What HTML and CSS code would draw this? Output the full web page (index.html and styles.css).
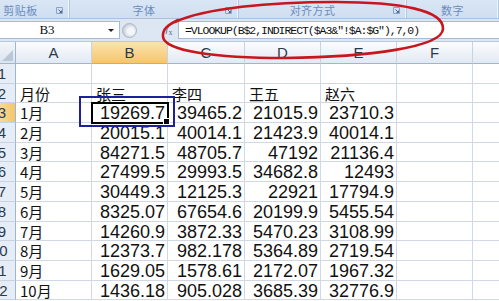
FILE: index.html
```html
<!DOCTYPE html>
<html lang="zh-CN">
<head>
  <meta charset="UTF-8" />
  <title>Excel - VLOOKUP</title>
  <link rel="stylesheet" href="styles.css">
</head>
<body>

  <!-- ribbon group labels -->
  <div class="ribbon">
    <div class="group g-clip"><span class="label">剪贴板</span><span class="launcher"><svg viewBox="0 0 9 9" width="9" height="9"><path d="M1.5 1.5h6v6h-6z" fill="none" stroke="#8aa4c8"/><path d="M3.5 3.5l3 3M6.5 4.5v2h-2" fill="none" stroke="#51698f"/></svg></span></div>
    <div class="group g-font"><span class="label">字体</span><span class="launcher"><svg viewBox="0 0 9 9" width="9" height="9"><path d="M1.5 1.5h6v6h-6z" fill="none" stroke="#8aa4c8"/><path d="M3.5 3.5l3 3M6.5 4.5v2h-2" fill="none" stroke="#51698f"/></svg></span></div>
    <div class="group g-align"><span class="label">对齐方式</span><span class="launcher"><svg viewBox="0 0 9 9" width="9" height="9"><path d="M1.5 1.5h6v6h-6z" fill="none" stroke="#8aa4c8"/><path d="M3.5 3.5l3 3M6.5 4.5v2h-2" fill="none" stroke="#51698f"/></svg></span></div>
    <div class="group g-num"><span class="label">数字</span></div>
  </div>

  <!-- formula bar -->
  <div class="fbar">
    <div class="namebox"><span class="ref">B3</span><span class="drop"></span></div>
    <div class="splitter"><span class="knob"></span></div>
    <div class="fx"><i>f</i><sub>x</sub></div>
    <div class="formula">=VLOOKUP(B$2,INDIRECT($A3&amp;"!$A:$G"),7,0)</div>
  </div>

  <!-- worksheet -->
  <div class="sheet">
    <div class="corner"></div>
    <div class="ch">A</div><div class="ch on">B</div><div class="ch">C</div><div class="ch">D</div><div class="ch">E</div><div class="ch">F</div><div class="ch"></div>

    <div class="rh">1</div>
    <div class="c"></div><div class="c"></div><div class="c"></div><div class="c"></div><div class="c"></div><div class="c"></div><div class="c"></div>

    <div class="rh">2</div>
    <div class="c t">月份</div><div class="c t">张三</div><div class="c t">李四</div><div class="c t">王五</div><div class="c t">赵六</div><div class="c"></div><div class="c"></div>

    <div class="rh on">3</div>
    <div class="c t">1月</div><div class="c n sel">19269.7</div><div class="c n">39465.2</div><div class="c n">21015.9</div><div class="c n">23710.3</div><div class="c"></div><div class="c"></div>

    <div class="rh">4</div>
    <div class="c t">2月</div><div class="c n">20015.1</div><div class="c n">40014.1</div><div class="c n">21423.9</div><div class="c n">40014.1</div><div class="c"></div><div class="c"></div>

    <div class="rh">5</div>
    <div class="c t">3月</div><div class="c n">84271.5</div><div class="c n">48705.7</div><div class="c n">47192</div><div class="c n">21136.4</div><div class="c"></div><div class="c"></div>

    <div class="rh">6</div>
    <div class="c t">4月</div><div class="c n">27499.5</div><div class="c n">29993.5</div><div class="c n">34682.8</div><div class="c n">12493</div><div class="c"></div><div class="c"></div>

    <div class="rh">7</div>
    <div class="c t">5月</div><div class="c n">30449.3</div><div class="c n">12125.3</div><div class="c n">22921</div><div class="c n">17794.9</div><div class="c"></div><div class="c"></div>

    <div class="rh">8</div>
    <div class="c t">6月</div><div class="c n">8325.07</div><div class="c n">67654.6</div><div class="c n">20199.9</div><div class="c n">5455.54</div><div class="c"></div><div class="c"></div>

    <div class="rh">9</div>
    <div class="c t">7月</div><div class="c n">14260.9</div><div class="c n">3872.33</div><div class="c n">5470.23</div><div class="c n">3108.99</div><div class="c"></div><div class="c"></div>

    <div class="rh">10</div>
    <div class="c t">8月</div><div class="c n">12373.7</div><div class="c n">982.178</div><div class="c n">5364.89</div><div class="c n">2719.54</div><div class="c"></div><div class="c"></div>

    <div class="rh">11</div>
    <div class="c t">9月</div><div class="c n">1629.05</div><div class="c n">1578.61</div><div class="c n">2172.07</div><div class="c n">1967.32</div><div class="c"></div><div class="c"></div>

    <div class="rh">12</div>
    <div class="c t">10月</div><div class="c n">1436.18</div><div class="c n">905.028</div><div class="c n">3685.39</div><div class="c n">32776.9</div><div class="c"></div><div class="c"></div>
  </div>

  <!-- red hand-drawn mark around the formula -->
  <svg class="mark" width="499" height="70" viewBox="0 0 499 70">
    <path d="M175,22 C205,8 270,2 335,2 C400,2 444,10 443,29 C442,47 370,57 285,58 C215,58 165,51 163,37 C162,29 168,25 178,20"
          fill="none" stroke="#c8161d" stroke-width="2.6" stroke-linecap="round"/>
  </svg>

</body>
</html>
```

FILE: styles.css
```css
* {
  box-sizing: border-box;
}
body {
  margin: 0;
  width: 499px;
  height: 301px;
  overflow: hidden;
  position: relative;
  background: #fff;
  font-family: 'Liberation Sans', Arial, sans-serif;
}

/* ribbon */
.ribbon {
  display: flex;
  height: 19px;
  background: linear-gradient(#d9e6f5, #cfdef1);
  border-bottom: 1px solid #a9c0de;
}
.group {
  display: flex;
  align-items: center;
  padding-top: 2px;
  border-right: 1px solid #b4c8e2;
  box-shadow: inset -1px 0 0 #eef4fb;
}
.group .label {
  flex: 1;
  text-align: center;
  font-family: 'Noto Sans CJK SC', sans-serif;
  font-size: 11px;
  color: #6b8cbd;
  letter-spacing: 0.5px;
}
.launcher {
  width: 9px;
  height: 9px;
  margin-right: 5px;
  display: flex;
}
.g-clip { width: 72px; }
.g-clip .label { padding-right: 14px; }
.g-font { width: 175px; }
.g-font .label { padding-right: 6px; }
.g-align { width: 173px; }
.g-align .label { padding-right: 6px; }
.g-num { width: 95px; }

/* formula bar */
.fbar {
  display: flex;
  align-items: center;
  height: 23px;
  padding: 2px 0 2px 0;
  background: #dde7f4;
  border-bottom: 1px solid #b7c9e0;
}
.namebox {
  display: flex;
  align-items: center;
  width: 120px;
  height: 100%;
  background: #fff;
  border: 1px solid #a7bad3;
  border-left: none;
}
.ref {
  flex: 1;
  text-align: center;
  font-family: 'Liberation Serif', serif;
  font-size: 13px;
  color: #111;
  padding-right: 14px;
}
.drop {
  width: 0;
  height: 0;
  margin-right: 5px;
  border-left: 3px solid transparent;
  border-right: 3px solid transparent;
  border-top: 3px solid #222;
}
.splitter {
  width: 40px;
  display: flex;
  align-items: center;
  padding-left: 2px;
}
.knob {
  width: 15px;
  height: 15px;
  border-radius: 50%;
  background: radial-gradient(circle at 60% 55%, #f4f6f9 30%, #c5ccd6 75%, #9aa6b5);
  border: 1px solid #aab5c4;
}
.fx {
  width: 18px;
  font-family: 'Liberation Serif', serif;
  font-size: 11px;
  color: #5a6b82;
  text-align: center;
}
.fx sub {
  font-size: 8px;
}
.formula {
  flex: 1;
  height: 100%;
  background: #fff;
  border: 1px solid #a7bad3;
  border-right: none;
  padding-left: 6px;
  font-family: 'Liberation Mono', monospace;
  font-size: 11.5px;
  letter-spacing: -1.05px;
  line-height: 18px;
  color: #111;
}

/* worksheet grid */
.sheet {
  display: grid;
  grid-template-columns: 25px 76px 76px 77px 76px 76px 76px 76px;
  grid-template-rows: 22px repeat(12, 19.7px);
  margin-left: -9px;
}
.corner {
  position: relative;
  background: linear-gradient(#f3f6fa, #dbe4ef);
  border-right: 1px solid #9eb6ce;
  border-bottom: 1px solid #9eb6ce;
}
.corner::after {
  content: "";
  position: absolute;
  right: 2px;
  bottom: 2px;
  border-left: 11px solid transparent;
  border-bottom: 11px solid #b9c7d8;
}
.ch {
  background: linear-gradient(#fbfcfe, #e2e9f3);
  border-right: 1px solid #c5d3e3;
  border-bottom: 1px solid #9eb6ce;
  text-align: center;
  font-size: 15px;
  line-height: 22px;
  color: #2a3a4e;
}
.ch.on {
  background: linear-gradient(#fbe3b0, #f5c66b);
  border-bottom-color: #f2a537;
}
.rh {
  background: #e6edf7;
  border-right: 1px solid #9eb6ce;
  border-bottom: 1px solid #c5d3e3;
  text-align: right;
  padding-right: 9px;
  font-size: 15px;
  line-height: 19px;
  color: #2a3a4e;
}
.rh.on {
  background: linear-gradient(90deg, #fbe3b0, #f5c66b);
}
.c {
  border-right: 1px solid #d0d7e5;
  border-bottom: 1px solid #d0d7e5;
  white-space: nowrap;
  color: #111;
}
.c.t {
  padding-left: 4px;
  font-family: 'Noto Sans CJK SC', sans-serif;
  font-size: 15px;
  line-height: 20px;
}
.c.n {
  text-align: right;
  padding-right: 2px;
  font-size: 18px;
  line-height: 20px;
}

/* active cell */
.sel {
  position: relative;
  outline: 2px solid #000;
  outline-offset: -1px;
}
.sel::after {
  content: "";
  position: absolute;
  right: -3px;
  bottom: -3px;
  width: 5px;
  height: 5px;
  background: #000;
  border: 1px solid #fff;
}
.sel::before {
  content: "";
  position: absolute;
  left: -13px;
  top: -7px;
  right: -8px;
  bottom: -5px;
  border: 2.5px solid #1d1f9b;
}

.mark {
  position: absolute;
  left: 0;
  top: 0;
  pointer-events: none;
}
```
